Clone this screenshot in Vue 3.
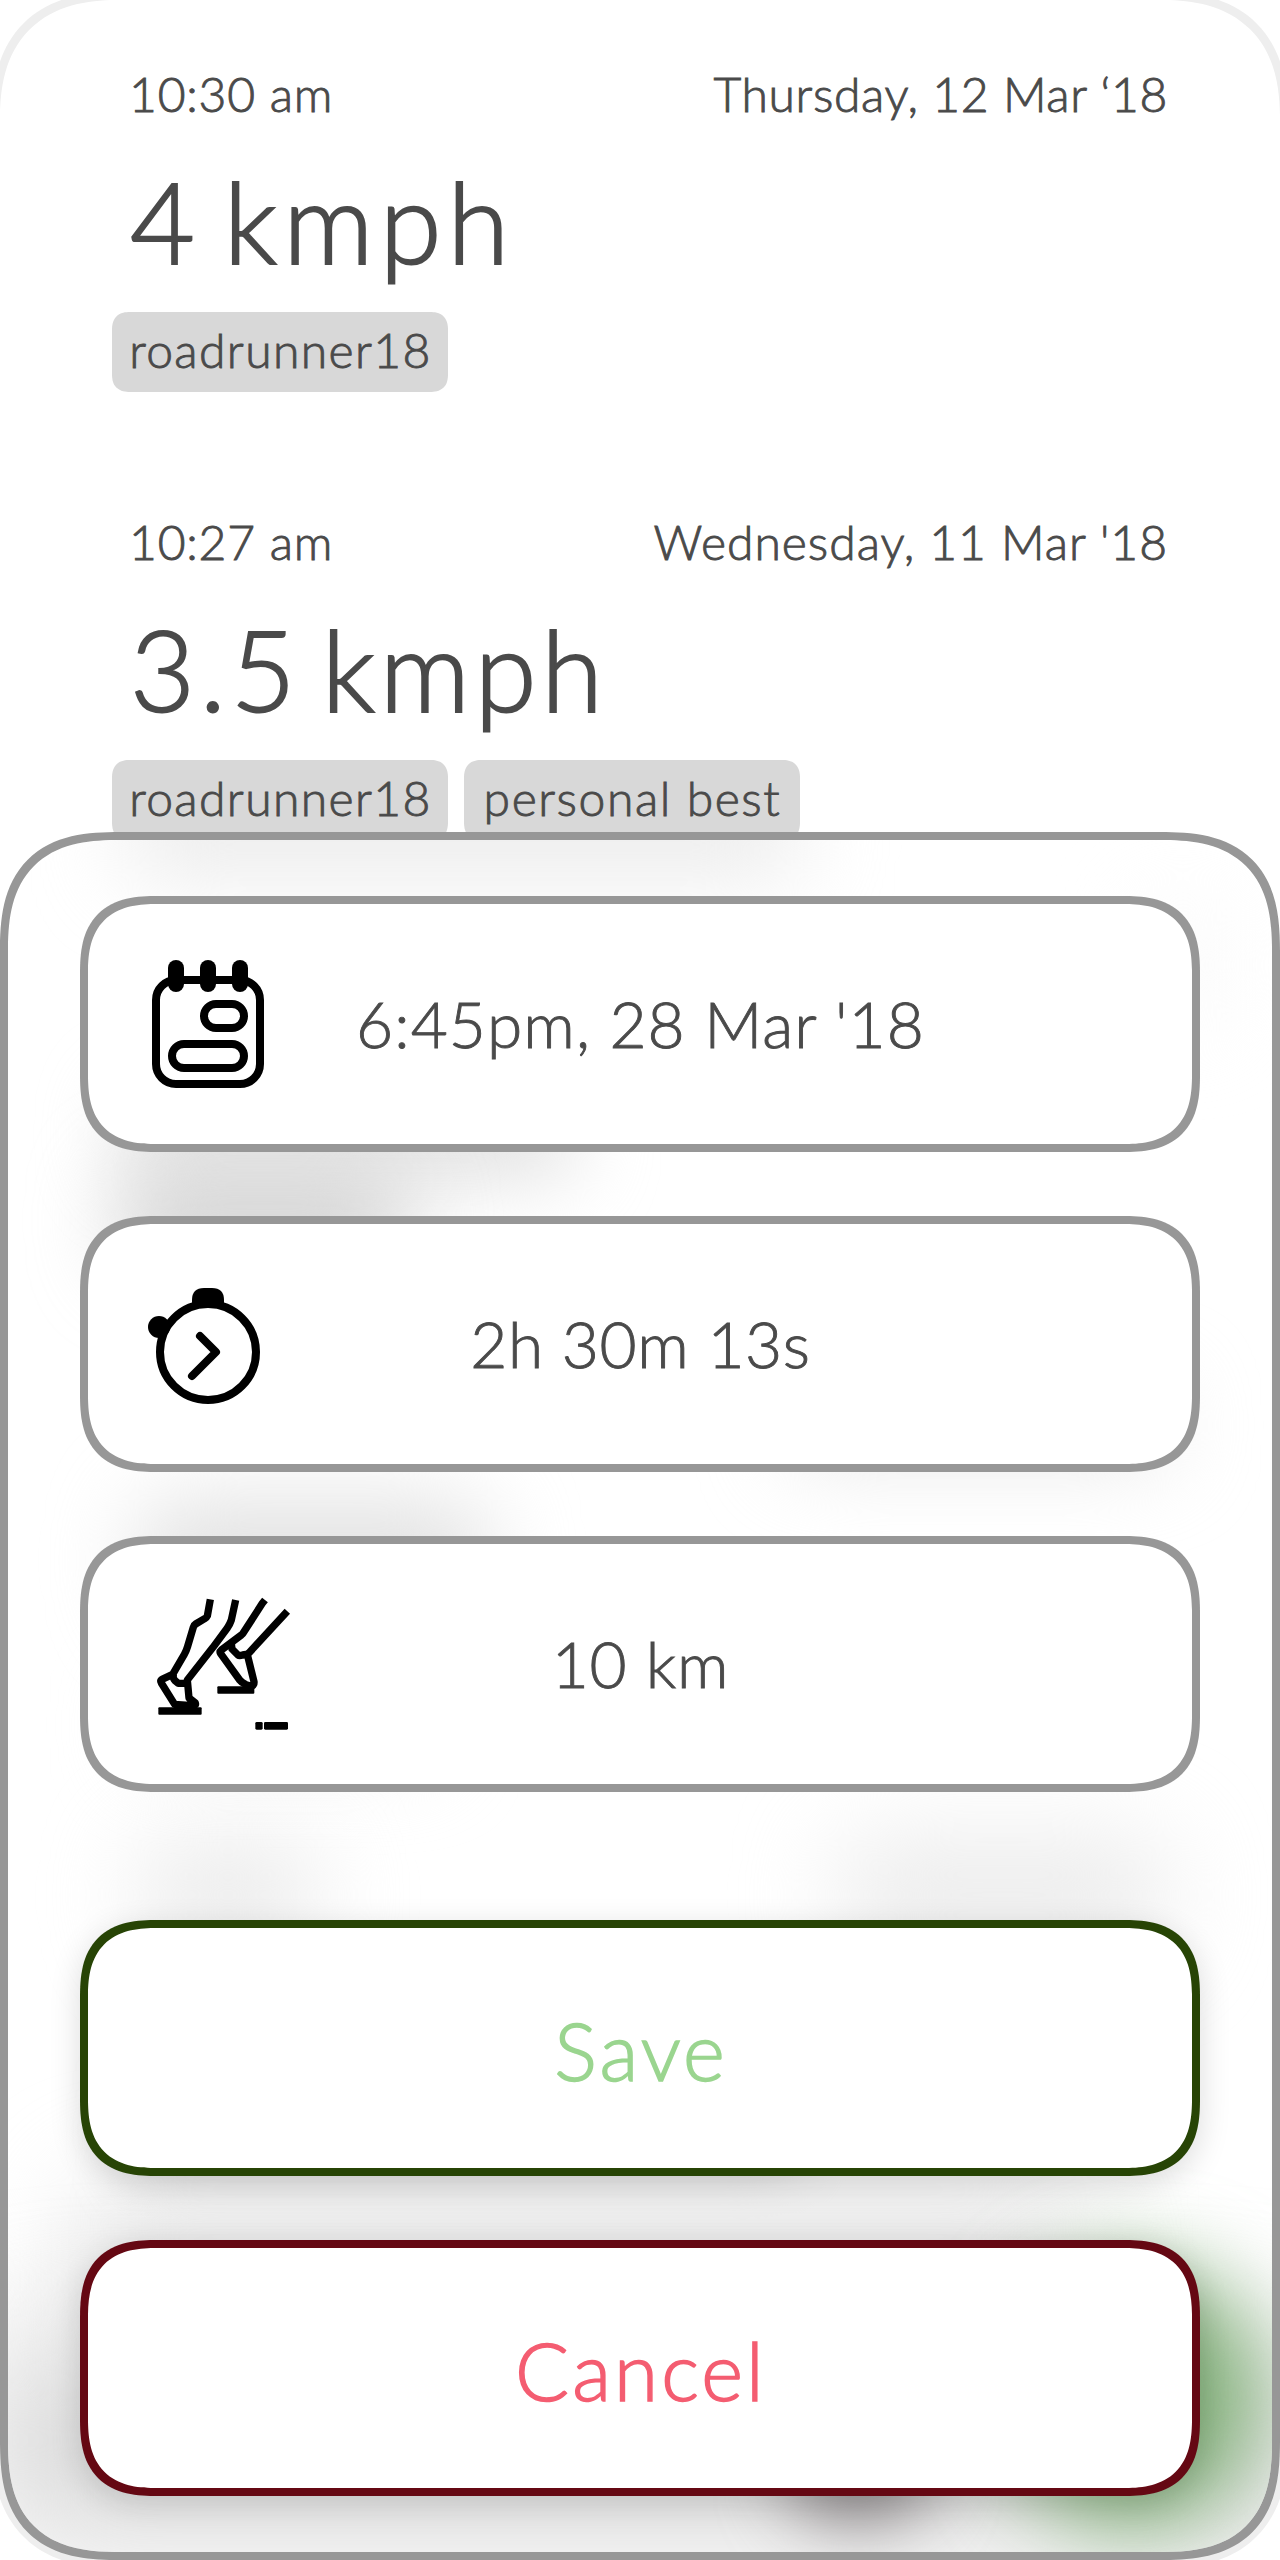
<script setup>
const runs = [
  {
    time: '10:30 am', timeGap: 0.8, date: 'Thursday, 12 Mar ‘18', dateGap: 0.65,
    speed: '4 kmph', speedGap: 6.2,
    tags: [{ name: 'roadrunner18', gap: 1.4 }],
  },
  {
    time: '10:27 am', timeGap: 0.8, date: "Wednesday, 11 Mar '18", dateGap: 1,
    speed: '3.5 kmph', speedGap: 4.8,
    tags: [{ name: 'roadrunner18', gap: 1.4 }, { name: 'personal best', gap: 1.6 }],
  },
]

const fields = [
  { icon: 'calendar', value: "6:45pm, 28 Mar '18", gap: 1.05 },
  { icon: 'stopwatch', value: '2h 30m 13s', gap: 0.6 },
  { icon: 'runner', value: '10 km', gap: 0.8 },
]

// Out-of-focus shapes behind the frosted sheet, relative to its padding box.
const blobs = [
  { x: 120, y: -50, w: 670, h: 80, r: 16, b: 44, c: '#e8e8e8' },
  { x: 1140, y: 70, w: 70, h: 110, r: 20, b: 44, c: '#f9f9f9' },
  { x: 110, y: 250, w: 460, h: 90, r: 40, b: 38, c: '#e2e2e2' },
  { x: 110, y: 330, w: 290, h: 100, r: 40, b: 42, c: '#d2d2d2' },
  { x: 780, y: 550, w: 380, h: 70, r: 20, b: 42, c: '#e6e6e6' },
  { x: 130, y: 660, w: 350, h: 120, r: 40, b: 42, c: '#e2e2e2' },
  { x: 130, y: 850, w: 300, h: 70, r: 20, b: 40, c: '#f0f0f0' },
  { x: 130, y: 1000, w: 180, h: 110, r: 40, b: 44, c: '#ececec' },
  { x: 830, y: 1000, w: 330, h: 110, r: 40, b: 48, c: '#ebebeb' },
  { x: 130, y: 1245, w: 660, h: 90, r: 16, b: 30, c: '#c6c6c6' },
  { x: 60, y: 1340, w: 1020, h: 200, r: 60, b: 50, c: '#e9e9e9' },
  { x: -30, y: 1500, w: 1330, h: 200, r: 60, b: 66, c: '#d8d8d8' },
  { x: 1000, y: 1425, w: 250, h: 260, r: 125, b: 44, c: '#80b077' },
  { x: 780, y: 1550, w: 140, h: 130, r: 50, b: 34, c: '#8b8688' },
]

const blobStyle = (s) => ({
  left: s.x + 'px',
  top: s.y + 'px',
  width: s.w + 'px',
  height: s.h + 'px',
  borderRadius: s.r + 'px',
  background: s.c,
  filter: `blur(${s.b}px)`,
})
const spacing = (px) => ({ letterSpacing: px + 'px' })
</script>

<template>
  <main class="screen">
    <div class="frame"></div>

    <section class="runs">
      <article v-for="run in runs" :key="run.date" class="run">
        <header class="run-head">
          <span :style="spacing(run.timeGap)">{{ run.time }}</span>
          <span :style="spacing(run.dateGap)">{{ run.date }}</span>
        </header>
        <div class="speed" :style="spacing(run.speedGap)">{{ run.speed }}</div>
        <div class="tags">
          <span v-for="tag in run.tags" :key="tag.name" class="tag" :style="spacing(tag.gap)">{{ tag.name }}</span>
        </div>
      </article>
    </section>

    <section class="sheet">
      <div class="haze">
        <i v-for="(s, n) in blobs" :key="n" class="blob" :style="blobStyle(s)"></i>
      </div>

      <div v-for="f in fields" :key="f.icon" class="card field">
        <svg v-if="f.icon === 'calendar'" class="icon" viewBox="0 0 180 180">
          <g fill="none" stroke="#000" stroke-width="8">
            <rect x="36" y="46" width="104" height="104" rx="20" />
            <rect x="84" y="70" width="40" height="24" rx="12" />
            <rect x="52" y="110" width="72" height="24" rx="12" />
          </g>
          <rect x="48" y="26" width="16" height="32" rx="8" />
          <rect x="80" y="26" width="16" height="32" rx="8" />
          <rect x="112" y="26" width="16" height="32" rx="8" />
        </svg>
        <svg v-else-if="f.icon === 'stopwatch'" class="icon" viewBox="0 0 180 180">
          <path d="M72 54V46Q72 34 84 34H92Q104 34 104 46V54Z" />
          <rect x="28" y="62" width="22" height="22" rx="11" />
          <g fill="none" stroke="#000" stroke-width="8" stroke-linecap="round" stroke-linejoin="round">
            <circle cx="88" cy="98" r="48" />
            <path d="M80 82 96 98 72 122" />
          </g>
        </svg>
        <svg v-else class="icon" viewBox="0 0 540 540">
          <g fill="none" stroke="#000" stroke-width="22" stroke-linejoin="round">
            <path d="M271 76 262 126 Q260 131 254 134L227 150Q222 153 220 160L202 220Q199 231 193 241L158 301 126 316Q120 320 124 327L164 391 218 395Q229 395 226 387L207 372 202 318 279 220 322 162Q330 150 334 138L347 78" />
            <path d="M160 300Q158 313 165 320L175 328H204" />
            <path d="M435 78 427 88 369 178 364 183 304 228Q298 233 302 239L359 318Q365 326 378 332L395 337Q403 332 402 323L382 242 502 112" />
            <path d="M334 209 336 225 354 243Q358 246 368 243L388 240" />
          </g>
          <rect x="115" y="400" width="130" height="22" rx="3" />
          <rect x="292" y="337" width="111" height="22" rx="3" />
          <rect x="406" y="444" width="22" height="23" rx="4" />
          <rect x="432" y="444" width="72" height="23" rx="4" />
        </svg>
        <span class="value" :style="spacing(f.gap)">{{ f.value }}</span>
      </div>

      <button class="card action save">Save</button>
      <button class="card action cancel">Cancel</button>
    </section>
  </main>
</template>

<style>
body {
  background: #fff;
}
</style>

<style scoped>
.screen {
  position: relative;
  width: 1280px;
  height: 2560px;
  overflow: hidden;
  box-sizing: border-box;
  background: #fff;
  color: #4a4a4a;
  font-family: Lato, "Open Sans", sans-serif;
  font-weight: 300;
}

.frame {
  position: absolute;
  inset: -8px;
  box-sizing: border-box;
  border: 8px solid #eee;
  border-radius: 128px;
  corner-shape: superellipse(1.3);
}

.runs {
  display: flex;
  flex-direction: column;
}

.run {
  height: 448px;
  box-sizing: border-box;
  padding: 66px 112px 0;
}

.run-head {
  display: flex;
  justify-content: space-between;
  padding-left: 17px;
  font-size: 48px;
  line-height: 56px;
  -webkit-text-stroke-width: 0.9px;
}

.speed {
  margin-top: 31px;
  padding-left: 18px;
  font-size: 112px;
  line-height: 136px;
  word-spacing: -14px;
  -webkit-text-stroke-width: 2px;
}

.tags {
  display: flex;
  gap: 16px;
  margin-top: 23px;
}

.tag {
  width: 336px;
  height: 80px;
  box-sizing: border-box;
  padding-left: 1px;
  border-radius: 18px;
  corner-shape: superellipse(1.3);
  background: #d8d8d8;
  font-size: 48px;
  line-height: 76px;
  text-align: center;
  white-space: nowrap;
  -webkit-text-stroke-width: 0.9px;
}

.sheet {
  position: absolute;
  left: 0;
  right: 0;
  top: 832px;
  height: 1728px;
  box-sizing: border-box;
  display: flex;
  flex-direction: column;
  gap: 64px;
  padding: 56px 72px;
  border: 8px solid #979797;
  border-radius: 120px;
  corner-shape: superellipse(1.4);
  background: #fff;
  overflow: hidden;
}

.haze {
  position: absolute;
  inset: 0;
}

.blob {
  position: absolute;
}

.card {
  position: relative;
  height: 256px;
  box-sizing: border-box;
  border: 8px solid #979797;
  border-radius: 78px;
  corner-shape: superellipse(1.4);
  background: #fff;
}

.field {
  display: grid;
  grid-template-columns: 212px 1fr 212px;
  align-items: center;
  font-size: 64px;
}

.icon {
  width: 180px;
  height: 180px;
  margin-left: 32px;
}

.value {
  margin: 0 -60px;
  padding-left: 1px;
  line-height: 240px;
  text-align: center;
  white-space: nowrap;
  -webkit-text-stroke-width: 0.9px;
}

.action {
  padding: 4px 0 0 2px;
  font: inherit;
  font-size: 80px;
  line-height: 236px;
  letter-spacing: 3.1px;
  -webkit-text-stroke-width: 1.5px;
  box-shadow: 0 8px 32px rgba(0, 0, 0, 0.14);
}

.save {
  margin-top: 64px;
  border-color: #274405;
  color: #9ad58f;
}

.cancel {
  border-color: #650813;
  color: #f45d71;
}
</style>
